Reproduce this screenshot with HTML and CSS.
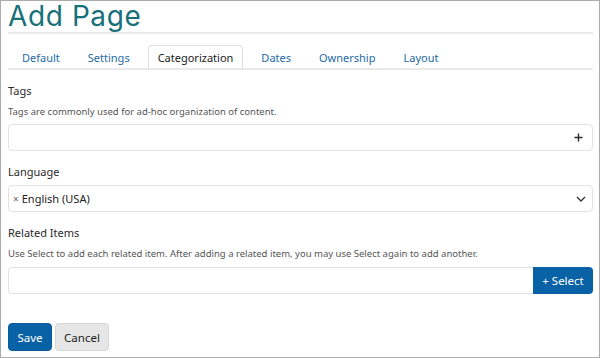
FILE: index.html
```html
<!DOCTYPE html>
<html lang="en">
<head>
<meta charset="utf-8">
<title>Add Page</title>
<link rel="stylesheet" href="styles.css">
</head>
<body>
<div class="frame">
  <h1 class="title">Add Page</h1>
  <ul class="tabs">
    <li class="tab">Default</li>
    <li class="tab">Settings</li>
    <li class="tab active">Categorization</li>
    <li class="tab">Dates</li>
    <li class="tab">Ownership</li>
    <li class="tab">Layout</li>
  </ul>

  <div class="field field-first">
    <div class="label">Tags</div>
    <div class="help">Tags are commonly used for ad-hoc organization of content.</div>
    <div class="input input-tags">
      <svg class="plus" width="9" height="9" viewBox="0 0 9 9"><path d="M4.5 0.5 V8.5 M0.5 4.5 H8.5" fill="none" stroke="#2a2a2a" stroke-width="1.4"/></svg>
    </div>
  </div>

  <div class="field">
    <div class="label">Language</div>
    <div class="input input-select">
      <span class="chip"><span class="chip-x">×</span>English (USA)</span>
      <svg class="chev" width="10" height="6" viewBox="0 0 10 6"><path d="M1 1 L5 5 L9 1" fill="none" stroke="#333" stroke-width="1.3"/></svg>
    </div>
  </div>

  <div class="field">
    <div class="label">Related Items</div>
    <div class="help help-related">Use Select to add each related item. After adding a related item, you may use Select again to add another.</div>
    <div class="group">
      <div class="input input-grow"></div>
      <button class="btn btn-select">+ Select</button>
    </div>
  </div>

  <div class="actions">
    <button class="btn btn-primary">Save</button>
    <button class="btn btn-default">Cancel</button>
  </div>
</div>
</body>
</html>
```

FILE: styles.css
```css
* { box-sizing: border-box; }
html, body { margin: 0; padding: 0; background: #fff; }
body { font-family: "Noto Sans", "Open Sans", sans-serif; color: #222; }

.frame {
  width: 600px;
  height: 358px;
  border: 1px solid #ababab;
  padding: 0 6px 0 7px;
  overflow: hidden;
}

.title {
  margin: 0;
  font-family: Inter, "Liberation Sans", sans-serif;
  font-weight: 400;
  font-size: 28px;
  line-height: 31px;
  letter-spacing: 0.6px;
  color: #17707a;
  border-bottom: 2px solid #e9e9e9;
}

.tabs {
  list-style: none;
  margin: 11px 0 0;
  padding: 0 0 0 4px;
  display: flex;
  gap: 8px;
  border-bottom: 2px solid #e9e9e9;
}
.tab {
  font-size: 11px;
  line-height: 21px;
  padding: 1px 9px 0;
  border: 1px solid transparent;
  border-bottom: 0;
  border-radius: 4px 4px 0 0;
  color: #1e6aa6;
}
.tab.active {
  border-color: #dedede;
  color: #222;
  background: #fff;
}

.field { margin-top: 12px; }
.label {
  font-size: 11px;
  line-height: 17px;
  color: #2a2a2a;
}
.help {
  margin-top: 6px;
  font-size: 9.5px;
  line-height: 14px;
  color: #555;
}
.input {
  margin-top: 5px;
  height: 27px;
  border: 1px solid #e2e2e2;
  border-radius: 4px;
  background: #fff;
  display: flex;
  align-items: center;
}
.input-tags { justify-content: flex-end; padding-right: 9px; }
.plus { display: block; }
.input-select { justify-content: space-between; padding: 0 6px 0 4px; }
.chip { font-size: 11px; color: #222; display: flex; align-items: center; }
.chip-x { font-size: 10px; color: #666; margin-right: 3px; }
.chev { display: block; }

.help-related { margin-top: 6px; }
.group { display: flex; margin-top: 6px; }
.group .input { margin-top: 0; }
.input-grow { flex: 1; border-radius: 4px 0 0 4px; border-right: 0; }
.btn {
  font-family: "Noto Sans", "Open Sans", sans-serif;
  font-size: 11.5px;
  border-radius: 4px;
  cursor: pointer;
}
.btn-select {
  width: 60px;
  height: 27px;
  border: 0;
  border-radius: 0 4px 4px 0;
  background: #0a62a6;
  color: #fff;
  padding: 0;
}
.actions { display: flex; gap: 3px; margin-top: 29px; }
.btn-primary {
  width: 44px;
  height: 28px;
  border: 1px solid #0a5b9c;
  background: #0a62a6;
  color: #fff;
  padding: 0;
}
.btn-default {
  width: 54px;
  height: 28px;
  border: 1px solid #d6d6d6;
  background: #e6e6e6;
  color: #222;
  padding: 0;
}
```
